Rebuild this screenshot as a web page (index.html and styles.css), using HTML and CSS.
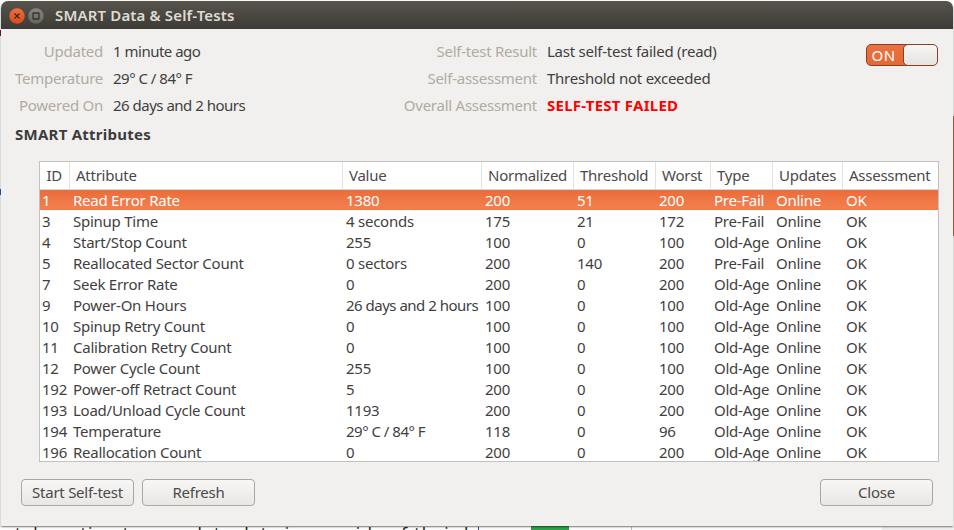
FILE: index.html
```html
<!DOCTYPE html>
<html lang="en">
<head>
<meta charset="utf-8">
<title>SMART Data &amp; Self-Tests</title>
<link rel="stylesheet" href="styles.css">
</head>
<body>
<div class="desktop">
  <p class="behind-text">take action to complete data in any side of their health</p>
  <span class="bit bit-green"></span>
  <span class="bit bit-rust"></span>
  <span class="bit bit-line1"></span>
  <span class="bit bit-line2"></span>
  <span class="bit bit-blue"></span>
  <span class="bit bit-side"></span>
  <span class="bit bit-gray"></span>
  <div class="window">
    <header class="titlebar">
      <svg class="tb-btn" width="16" height="16" viewBox="0 0 16 16"><defs><linearGradient id="cl" x1="0" y1="0" x2="0" y2="1"><stop offset="0" stop-color="#f26d3d"/><stop offset="1" stop-color="#dc4a1e"/></linearGradient></defs><circle cx="8" cy="8" r="7.7" fill="url(#cl)"/><path d="M5.5 5.5l5 5M10.5 5.5l-5 5" stroke="#3c2a22" stroke-width="1.3" fill="none"/></svg>
      <svg class="tb-btn" width="16" height="16" viewBox="0 0 16 16"><defs><linearGradient id="mx" x1="0" y1="0" x2="0" y2="1"><stop offset="0" stop-color="#8a8780"/><stop offset="1" stop-color="#66635c"/></linearGradient></defs><circle cx="8" cy="8" r="7.7" fill="url(#mx)"/><rect x="5" y="5" width="6" height="6" rx=".5" fill="none" stroke="#34322d" stroke-width="1.3"/></svg>
      <h1 class="title">SMART Data &amp; Self-Tests</h1>
    </header>
    <main class="content">
      <section class="info">
        <span class="lbl">Updated</span><span class="val tight">1 minute ago</span>
        <span class="lbl">Self-test Result</span><span class="val">Last self-test failed (read)</span>
        <div class="switch"><span class="switch-on">ON</span><span class="knob"></span></div>
        <span class="lbl row-start">Temperature</span><span class="val tight">29° C / 84° F</span>
        <span class="lbl">Self-assessment</span><span class="val">Threshold not exceeded</span>
        <span class="lbl row-start">Powered On</span><span class="val tight">26 days and 2 hours</span>
        <span class="lbl">Overall Assessment</span><span class="val fail">SELF-TEST FAILED</span>
      </section>
      <h2 class="section-title">SMART Attributes</h2>
      <div class="table-wrap">
        <table class="attrs">
          <colgroup><col class="c-id"><col class="c-attr"><col class="c-value"><col class="c-norm"><col class="c-thr"><col class="c-worst"><col class="c-type"><col class="c-upd"><col class="c-assess"></colgroup>
          <thead><tr><th>ID</th><th>Attribute</th><th>Value</th><th>Normalized</th><th>Threshold</th><th>Worst</th><th>Type</th><th>Updates</th><th>Assessment</th></tr></thead>
          <tbody>
            <tr class="selected"><td>1</td><td>Read Error Rate</td><td>1380</td><td>200</td><td>51</td><td>200</td><td>Pre-Fail</td><td>Online</td><td>OK</td></tr>
            <tr><td>3</td><td>Spinup Time</td><td>4 seconds</td><td>175</td><td>21</td><td>172</td><td>Pre-Fail</td><td>Online</td><td>OK</td></tr>
            <tr><td>4</td><td>Start/Stop Count</td><td>255</td><td>100</td><td>0</td><td>100</td><td>Old-Age</td><td>Online</td><td>OK</td></tr>
            <tr><td>5</td><td>Reallocated Sector Count</td><td>0 sectors</td><td>200</td><td>140</td><td>200</td><td>Pre-Fail</td><td>Online</td><td>OK</td></tr>
            <tr><td>7</td><td>Seek Error Rate</td><td>0</td><td>200</td><td>0</td><td>200</td><td>Old-Age</td><td>Online</td><td>OK</td></tr>
            <tr><td>9</td><td>Power-On Hours</td><td class="tight">26 days and 2 hours</td><td>100</td><td>0</td><td>100</td><td>Old-Age</td><td>Online</td><td>OK</td></tr>
            <tr><td>10</td><td>Spinup Retry Count</td><td>0</td><td>100</td><td>0</td><td>100</td><td>Old-Age</td><td>Online</td><td>OK</td></tr>
            <tr><td>11</td><td>Calibration Retry Count</td><td>0</td><td>100</td><td>0</td><td>100</td><td>Old-Age</td><td>Online</td><td>OK</td></tr>
            <tr><td>12</td><td>Power Cycle Count</td><td>255</td><td>100</td><td>0</td><td>100</td><td>Old-Age</td><td>Online</td><td>OK</td></tr>
            <tr><td>192</td><td>Power-off Retract Count</td><td>5</td><td>200</td><td>0</td><td>200</td><td>Old-Age</td><td>Online</td><td>OK</td></tr>
            <tr><td>193</td><td>Load/Unload Cycle Count</td><td>1193</td><td>200</td><td>0</td><td>200</td><td>Old-Age</td><td>Online</td><td>OK</td></tr>
            <tr><td>194</td><td>Temperature</td><td class="tight">29° C / 84° F</td><td>118</td><td>0</td><td>96</td><td>Old-Age</td><td>Online</td><td>OK</td></tr>
            <tr><td>196</td><td>Reallocation Count</td><td>0</td><td>200</td><td>0</td><td>200</td><td>Old-Age</td><td>Online</td><td>OK</td></tr>
          </tbody>
        </table>
      </div>
      <footer class="actions">
        <button class="btn">Start Self-test</button>
        <button class="btn">Refresh</button>
        <button class="btn btn-close">Close</button>
      </footer>
    </main>
  </div>
</div>
</body>
</html>
```
FILE: styles.css
```css
* { box-sizing: border-box; }
html, body { margin: 0; padding: 0; }
body { width: 954px; height: 530px; overflow: hidden; font-family: "Noto Sans", sans-serif; font-size: 15px; letter-spacing: -0.25px; color: #3c3c3c; }
.desktop { position: relative; width: 954px; height: 530px; background: #fff; overflow: hidden; }
.behind-text { position: absolute; left: 15px; top: 521px; width: 465px; overflow: hidden; margin: 0; font-size: 17px; letter-spacing: 1.3px; color: #222; white-space: nowrap; }
.bit { position: absolute; display: block; }
.bit-green { left: 531px; top: 526px; width: 38px; height: 4px; background: #2ea24e; }
.bit-rust { left: 953px; top: 116px; width: 1px; height: 120px; background: #b5673c; }
.bit-line1 { left: 0; top: 30px; width: 1px; height: 6px; background: #6b1e2e; }
.bit-line2 { left: 0; top: 189px; width: 1px; height: 6px; background: #1d5fae; }
.bit-blue { left: 478px; top: 527px; width: 1px; height: 3px; background: #2b4f9e; }
.bit-side { left: 631px; top: 527px; width: 1px; height: 3px; background: #bbb; }
.bit-gray { left: 882px; top: 527px; width: 72px; height: 3px; background: #f0f0f0; }
.window { position: absolute; left: 1px; top: 1px; width: 952px; height: 525px; background: #f1f0ee; border-radius: 7px 7px 0 0; box-shadow: 0 1px 2px rgba(0,0,0,.55); display: flex; flex-direction: column; overflow: hidden; }
.titlebar { height: 28px; flex: none; display: flex; align-items: center; padding: 0 0 0 8px; gap: 2.5px; background: linear-gradient(#57544c, #3d3b36); }
.tb-btn { flex: none; margin-top: 1px; }
.title { margin: 0 0 0 9px; font-size: 15px; font-weight: 600; color: #dfdbd2; letter-spacing: 0.15px; }
.content { flex: 1; display: flex; flex-direction: column; padding: 9px 14px 0 14px; }
.info { display: grid; grid-template-columns: 88px 278px 136px 309px 72px; grid-template-rows: 26px 27px 27px; column-gap: 10px; align-items: center; height: 80px; }
.row-start { grid-column: 1; }
.lbl { text-align: right; color: #b1aba2; white-space: nowrap; }
.val { white-space: nowrap; color: #3f3f3f; }
.tight { letter-spacing: -0.5px; }
.fail { color: #ff0000; font-weight: 700; letter-spacing: 0.25px; }
.switch { grid-row: 1 / span 2; grid-column: 5; display: flex; width: 72px; height: 22px; border: 1px solid #8a3f20; border-radius: 5px; background: linear-gradient(#ea7240, #e26a38); overflow: hidden; align-self: start; margin-top: 6px; }
.switch-on { width: 36px; padding-right: 3px; text-align: center; color: #fff; line-height: 20px; letter-spacing: .4px; }
.knob { flex: 1; background: linear-gradient(#f7f6f5, #e6e4e1); border: 1px solid #8a3f20; border-radius: 5px; margin: -1px -1px -1px 0; }
.section-title { margin: 6px 0 0; font-size: 15px; font-weight: 700; letter-spacing: 0.25px; color: #3c3c3c; line-height: 20px; }
.table-wrap { margin: 17px 0 0 24px; width: 900px; height: 301px; flex: none; border: 1px solid #c4c2be; background: #fff; overflow: hidden; }
.attrs { border-collapse: collapse; table-layout: fixed; width: 898px; }
.c-id { width: 29px; } .c-attr { width: 273px; } .c-value { width: 139px; } .c-norm { width: 92px; }
.c-thr { width: 82px; } .c-worst { width: 55px; } .c-type { width: 62px; } .c-upd { width: 70px; } .c-assess { width: 96px; }
.attrs th { height: 27px; padding: 0 0 1px 6.5px; font-weight: 400; text-align: left; color: #4a4a4a; white-space: nowrap; border-right: 1px solid #e2e1de; border-bottom: 1px solid #d8d6d3; background: #fff; }
.attrs th:last-child { border-right: 0; }
.attrs td { height: 21px; padding: 0 0 0 4px; white-space: nowrap; overflow: hidden; color: #3f3f3f; }
.attrs td:first-child { padding-left: 2px; }
.selected td { background: linear-gradient(#e96c3a, #f57f4f); }
.attrs .selected td { color: #fff; }
.actions { display: flex; gap: 8px; margin: 17px 0 0 6px; width: 912px; }
.btn { width: 113px; height: 27px; padding: 0 0 2px; font: inherit; letter-spacing: inherit; color: #4a4a4a; background: linear-gradient(#f8f7f6, #e9e7e4); border: 1px solid #a9a7a2; border-radius: 4px; }
.btn-close { margin-left: auto; }
```
